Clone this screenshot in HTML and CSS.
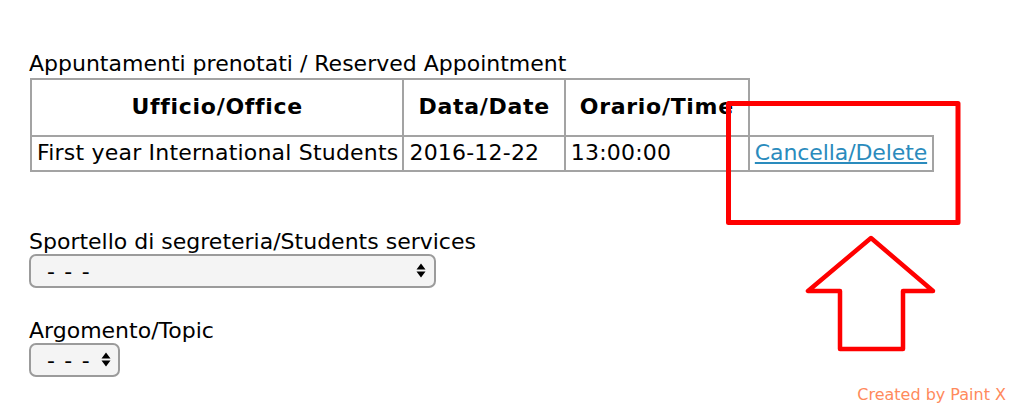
FILE: index.html
```html
<!DOCTYPE html>
<html lang="en">
<head>
  <meta charset="UTF-8" />
  <title>Prenotazione appuntamenti</title>
  <link rel="stylesheet" href="styles.css">
</head>
<body>
  <div class="page">
    <div class="caption">Appuntamenti prenotati / Reserved Appointment</div>
    <table class="booked">
      <tr>
        <th>Ufficio/Office</th>
        <th>Data/Date</th>
        <th>Orario/Time</th>
      </tr>
      <tr>
        <td>First year International Students</td>
        <td>2016-12-22</td>
        <td>13:00:00</td>
        <td><a href="#">Cancella/Delete</a></td>
      </tr>
    </table>

    <div class="field first">
      <label for="office">Sportello di segreteria/Students services</label>
      <div class="select-wrap wide">
        <select id="office" name="office">
          <option>- - -</option>
        </select>
        <svg class="arrows" width="10" height="15" viewBox="0 0 10 15"><path d="M0.5 6.5 L5 0.5 L9.5 6.5 Z M0.5 8.5 L9.5 8.5 L5 14.5 Z" fill="#000"/></svg>
      </div>
    </div>

    <div class="field">
      <label for="topic">Argomento/Topic</label>
      <div class="select-wrap narrow">
        <select id="topic" name="topic">
          <option>- - -</option>
        </select>
        <svg class="arrows" width="10" height="15" viewBox="0 0 10 15"><path d="M0.5 6.5 L5 0.5 L9.5 6.5 Z M0.5 8.5 L9.5 8.5 L5 14.5 Z" fill="#000"/></svg>
      </div>
    </div>
  </div>

  <!-- annotation drawn on top of the screenshot -->
  <svg class="markup" width="1012" height="410" viewBox="0 0 1012 410">
    <rect x="728.5" y="103.5" width="229.5" height="119" fill="none" stroke="#ff0000" stroke-width="5" stroke-linejoin="round"/>
    <polygon points="871,238 808,291 840,291 840,349 903,349 903,291 933,291" fill="none" stroke="#ff0000" stroke-width="4.5" stroke-linejoin="round"/>
  </svg>
  <div class="credit">Created by Paint X</div>
</body>
</html>
```

FILE: styles.css
```css
body {
  margin: 0;
  padding: 0;
  background-color: #fff;
  font-family: "DejaVu Sans", Verdana, sans-serif;
  font-size: 22px;
  line-height: 24px;
  color: #000;
}
.page {
  padding: 52px 0 0 29px;
}
.caption {
  margin-bottom: 2px;
}
.booked {
  border-collapse: collapse;
  margin-left: 1px;
}
.booked th,
.booked td {
  border: 2px solid #a3a3a3;
}
.booked th {
  padding: 15px 14px 16px;
  text-align: center;
  font-weight: bold;
  letter-spacing: 0.7px;
}
.booked td {
  padding: 4px 5px 5px;
  white-space: nowrap;
  letter-spacing: 0.2px;
}
.booked td:first-child {
  padding-right: 4px;
}
.booked a {
  color: #2a8bbd;
  text-decoration: underline;
  letter-spacing: -0.1px;
}
.field {
  margin-top: 31px;
}
.field.first {
  margin-top: 58px;
}
.field label {
  display: block;
}
.select-wrap {
  position: relative;
  display: inline-block;
}
.select-wrap select {
  appearance: none;
  -webkit-appearance: none;
  height: 34px;
  border: 2px solid #9b9b9b;
  border-radius: 7px;
  background-color: #f4f4f4;
  font-family: "DejaVu Sans", Verdana, sans-serif;
  font-size: 22px;
  letter-spacing: 1.2px;
  color: #000;
  padding: 0 0 0 16px;
  margin: 0;
}
.select-wrap.wide select {
  width: 407px;
}
.select-wrap.narrow select {
  width: 91px;
}
.arrows {
  position: absolute;
  top: 9px;
  right: 10px;
}
.select-wrap.narrow .arrows {
  right: 9px;
}
.markup {
  position: absolute;
  top: 0;
  left: 0;
  pointer-events: none;
}
.credit {
  position: absolute;
  right: 6px;
  bottom: 6px;
  font-family: "DejaVu Sans", Verdana, sans-serif;
  font-size: 16px;
  line-height: 18px;
  color: #ff8a5c;
}
```
